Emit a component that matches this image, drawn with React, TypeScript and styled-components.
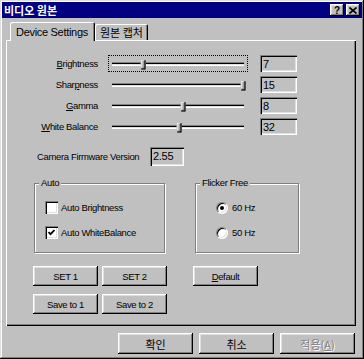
import React from 'react';
import styled, { createGlobalStyle } from 'styled-components';

const GlobalStyle = createGlobalStyle`
  html, body {
    margin: 0;
    padding: 0;
    background: #c0c0c0;
  }
  body {
    font-family: "Liberation Sans", Arial, "Noto Sans CJK KR", sans-serif;
    font-size: 9.5px;
    letter-spacing: -0.35px;
    color: #000;
  }
`;

const KR = `"Noto Sans CJK KR", "Liberation Sans", sans-serif`;

const raised = `
  box-shadow: inset -1px -1px #000, inset 1px 1px #fff, inset -2px -2px #808080, inset 2px 2px #dfdfdf;
`;

const sunken = `
  box-shadow: inset 1px 1px #808080, inset 2px 2px #000, inset -1px -1px #fff, inset -2px -2px #dfdfdf;
`;

const Window = styled.div`
  width: 364px;
  height: 359px;
  box-sizing: border-box;
  padding: 2px;
  display: flex;
  flex-direction: column;
  background: #c0c0c0;
  box-shadow: inset -1px -1px #000, inset 1px 1px #dfdfdf, inset -2px -2px #808080, inset 2px 2px #fff;
`;

const TitleBar = styled.div`
  height: 16px;
  display: flex;
  align-items: center;
  padding: 0 2px 0 2px;
  background: #000080;
  color: #fff;
`;

const Title = styled.span`
  font-family: ${KR};
  font-size: 11px;
  font-weight: bold;
  letter-spacing: 0;
  line-height: 16px;
`;

const CaptionButtons = styled.div`
  margin-left: auto;
  display: flex;
  gap: 2px;
`;

const CaptionButton = styled.div`
  width: 14px;
  height: 12px;
  display: flex;
  align-items: center;
  justify-content: center;
  background: #c0c0c0;
  color: #000;
  font-size: 10px;
  font-weight: bold;
  letter-spacing: 0;
  ${raised}
`;

const Body = styled.div`
  padding: 4px 6px 0 4px;
  display: flex;
  flex-direction: column;
`;

const TabStrip = styled.div`
  display: flex;
  align-items: flex-end;
  height: 18px;
  padding-left: 4px;
`;

const Tab = styled.div<{ $active?: boolean }>`
  position: relative;
  z-index: ${(p) => (p.$active ? 1 : 0)};
  height: ${(p) => (p.$active ? '19px' : '16px')};
  margin-bottom: ${(p) => (p.$active ? '-1px' : '0')};
  padding: ${(p) => (p.$active ? '0 7px 0 6px' : '0 5px')};
  box-sizing: border-box;
  display: flex;
  align-items: center;
  background: #c0c0c0;
  font-size: 11px;
  letter-spacing: ${(p) => (p.$active ? '-0.3px' : '0')};
  font-family: ${(p) => (p.$active ? `"Liberation Sans", sans-serif` : KR)};
  border-radius: 2px 2px 0 0;
  box-shadow: inset 1px 1px #fff, inset -1px 0 #000, inset -2px 0 #808080;
`;

const Panel = styled.div`
  height: 286px;
  box-sizing: border-box;
  padding-top: 15px;
  display: flex;
  flex-direction: column;
  box-shadow: inset 1px 1px #fff, inset -1px -1px #000, inset -2px -2px #808080;
`;

const SliderRows = styled.div`
  display: flex;
  flex-direction: column;
  gap: 4px;
`;

const SliderRow = styled.div`
  display: flex;
  align-items: center;
  height: 17px;
`;

const RowLabel = styled.div`
  width: 92px;
  text-align: right;
`;

const Slider = styled.div<{ $focused?: boolean }>`
  width: 140px;
  height: 17px;
  margin-left: 10px;
  box-sizing: border-box;
  padding: 0 3px;
  display: flex;
  align-items: center;
  border: 1px dotted ${(p) => (p.$focused ? '#000' : 'transparent')};
`;

const Track = styled.div`
  position: relative;
  flex: 1;
  height: 4px;
  box-sizing: border-box;
  border-top: 1px solid #808080;
  border-bottom: 1px solid #fff;
  background: linear-gradient(#000 50%, #dfdfdf 50%);
`;

const Thumb = styled.div`
  position: absolute;
  top: 50%;
  width: 5px;
  height: 10px;
  transform: translate(-50%, -45%);
  background: #c0c0c0;
  box-shadow: inset -1px -1px #000, inset 1px 1px #fff, inset -2px -2px #808080;
`;

const ValueBox = styled.div<{ $width?: number; $height?: number }>`
  width: ${(p) => p.$width ?? 37}px;
  height: ${(p) => p.$height ?? 17}px;
  box-sizing: border-box;
  padding: 2px 0 0 3px;
  font-size: 11px;
  letter-spacing: -0.3px;
  line-height: 14px;
  background: #c0c0c0;
  ${sunken}
`;

const SliderValue = styled(ValueBox)`
  margin-left: 12px;
`;

const FirmwareRow = styled.div`
  display: flex;
  align-items: center;
  margin-top: 12px;
  padding-left: 31px;
`;

const FirmwareLabel = styled.div`
  width: 113px;
`;

const GroupRow = styled.div`
  display: flex;
  gap: 30px;
  margin-top: 11px;
  padding-left: 28px;
`;

const Group = styled.fieldset<{ $width: number }>`
  width: ${(p) => p.$width}px;
  height: 76px;
  box-sizing: border-box;
  margin: 0;
  padding: 0;
  border: 1px solid #808080;
  box-shadow: inset 1px 1px #fff, 1px 1px #fff;
`;

const Legend = styled.legend`
  margin-left: 4px;
  padding: 0 2px;
  line-height: 12px;
  text-align: left;
  background: #c0c0c0;
`;

const Options = styled.div<{ $indent: number }>`
  display: flex;
  flex-direction: column;
  gap: 12px;
  padding: 12px 0 0 ${(p) => p.$indent}px;
`;

const Option = styled.label`
  display: flex;
  align-items: center;
  gap: 3px;
  height: 13px;
`;

const CheckBox = styled.span`
  width: 13px;
  height: 13px;
  box-sizing: border-box;
  display: flex;
  align-items: center;
  justify-content: center;
  background: #fff;
  ${sunken}
`;

const Radio = styled.span`
  width: 12px;
  height: 12px;
  box-sizing: border-box;
  border-radius: 50%;
  display: flex;
  align-items: center;
  justify-content: center;
  background: #fff;
  border: 1px solid;
  border-color: #808080 #fff #fff #808080;
  box-shadow: inset 1px 1px #000, inset -1px -1px #dfdfdf;
  margin-right: 1px;
`;

const RadioDot = styled.span`
  width: 4px;
  height: 4px;
  border-radius: 50%;
  background: #000;
`;

const ButtonArea = styled.div`
  display: flex;
  align-items: flex-start;
  margin-top: 13px;
  padding-left: 27px;
`;

const ButtonGrid = styled.div`
  display: grid;
  grid-template-columns: 65px 65px;
  column-gap: 4px;
  row-gap: 8px;
`;

const Button = styled.div<{ $width?: number; $height?: number; $disabled?: boolean; $kr?: boolean }>`
  width: ${(p) => p.$width ?? 65}px;
  height: ${(p) => p.$height ?? 20}px;
  box-sizing: border-box;
  display: flex;
  align-items: center;
  justify-content: center;
  background: #c0c0c0;
  font-size: ${(p) => (p.$kr ? '11px' : 'inherit')};
  font-family: ${(p) => (p.$kr ? KR : 'inherit')};
  letter-spacing: ${(p) => (p.$kr ? '0' : 'inherit')};
  color: ${(p) => (p.$disabled ? '#808080' : '#000')};
  text-shadow: ${(p) => (p.$disabled ? '1px 1px #fff' : 'none')};
  ${raised}
`;

const DefaultButton = styled(Button)`
  margin-left: 26px;
`;

const Footer = styled.div`
  display: flex;
  justify-content: flex-end;
  gap: 6px;
  margin-top: 7px;
  padding-right: 1px;
`;

const sliders = [
  { key: 'B', rest: 'rightness', value: 7, pos: 0.235, focused: true },
  { key: 'p', before: 'Shar', rest: 'ness', value: 15, pos: 0.99 },
  { key: 'G', rest: 'amma', value: 8, pos: 0.54 },
  { key: 'W', rest: 'hite Balance', value: 32, pos: 0.51 },
];

export default function App() {
  return (
    <>
      <GlobalStyle />
      <Window>
        <TitleBar>
          <Title>비디오 원본</Title>
          <CaptionButtons>
            <CaptionButton>?</CaptionButton>
            <CaptionButton>
              <svg width="8" height="7" viewBox="0 0 8 7">
                <path d="M0.5 0.5 L7.5 6.5 M7.5 0.5 L0.5 6.5" stroke="#000" strokeWidth="1.6" />
              </svg>
            </CaptionButton>
          </CaptionButtons>
        </TitleBar>
        <Body>
          <TabStrip>
            <Tab $active>Device Settings</Tab>
            <Tab>원본 캡처</Tab>
          </TabStrip>
          <Panel>
            <SliderRows>
              {sliders.map((s) => (
                <SliderRow key={s.key}>
                  <RowLabel>
                    {s.before}
                    <u>{s.key}</u>
                    {s.rest}
                  </RowLabel>
                  <Slider $focused={s.focused}>
                    <Track>
                      <Thumb style={{ left: `${s.pos * 100}%` }} />
                    </Track>
                  </Slider>
                  <SliderValue>{s.value}</SliderValue>
                </SliderRow>
              ))}
            </SliderRows>
            <FirmwareRow>
              <FirmwareLabel>Camera Firmware Version</FirmwareLabel>
              <ValueBox $width={34} $height={19}>2.55</ValueBox>
            </FirmwareRow>
            <GroupRow>
              <Group $width={131}>
                <Legend>Auto</Legend>
                <Options $indent={10}>
                  <Option>
                    <CheckBox />
                    Auto Brightness
                  </Option>
                  <Option>
                    <CheckBox>
                      <svg width="7" height="7" viewBox="0 0 7 7">
                        <path d="M0.5 3 L2.5 5.2 L6.5 1" stroke="#000" strokeWidth="1.8" fill="none" />
                      </svg>
                    </CheckBox>
                    Auto WhiteBalance
                  </Option>
                </Options>
              </Group>
              <Group $width={104}>
                <Legend>Flicker Free</Legend>
                <Options $indent={20}>
                  <Option>
                    <Radio>
                      <RadioDot />
                    </Radio>
                    60 Hz
                  </Option>
                  <Option>
                    <Radio />
                    50 Hz
                  </Option>
                </Options>
              </Group>
            </GroupRow>
            <ButtonArea>
              <ButtonGrid>
                <Button>SET 1</Button>
                <Button>SET 2</Button>
                <Button>Save to 1</Button>
                <Button>Save to 2</Button>
              </ButtonGrid>
              <DefaultButton>
                <u>D</u>efault
              </DefaultButton>
            </ButtonArea>
          </Panel>
          <Footer>
            <Button $width={75} $height={21} $kr>확인</Button>
            <Button $width={75} $height={21} $kr>취소</Button>
            <Button $width={75} $height={21} $kr $disabled>
              적용(<u>A</u>)
            </Button>
          </Footer>
        </Body>
      </Window>
    </>
  );
}
